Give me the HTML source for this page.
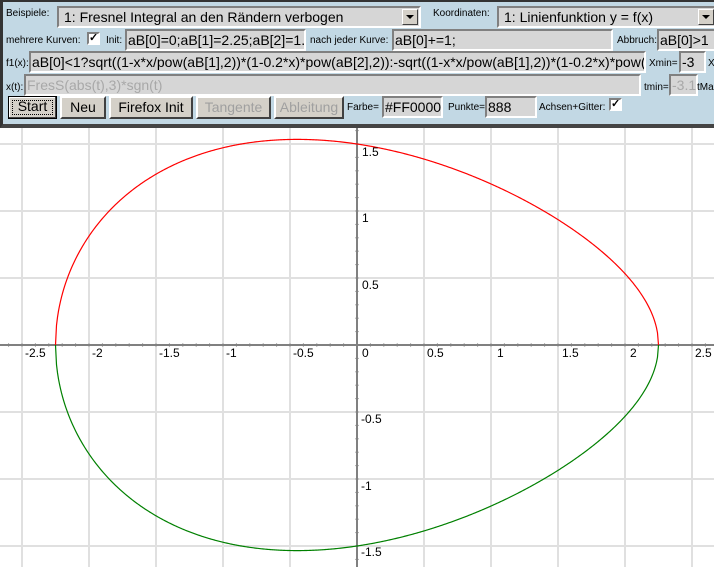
<!DOCTYPE html>
<html style="overflow:hidden;width:714px;height:567px"><head><meta charset="utf-8"><style>
*{box-sizing:border-box}
body{margin:0;width:714px;height:567px;overflow:hidden;background:#fff;font-family:"Liberation Sans",Arial,sans-serif;position:relative}
#panel{position:absolute;left:0;top:0;width:714px;height:128px;background:#c2d8e4;border-left:3px solid #333;border-top:2px solid #333;border-bottom:4px solid #444}
.l{position:absolute;font-size:10px;color:#000;white-space:nowrap}
.i{position:absolute;height:22px;background:#d6d6d6;border:2px solid;border-color:#808080 #fff #fff #808080;font-size:14px;line-height:18px;padding-left:1px;white-space:nowrap;overflow:hidden;color:#000}
.g{color:#a8a8a8}
.sel{position:absolute;height:22px;background:#d6d6d6;border:2px solid;border-color:#808080 #fff #fff #808080;font-size:14px;line-height:18px;padding-left:5px;white-space:nowrap;overflow:hidden}
.arr{position:absolute;right:1px;top:1px;width:16px;height:16px;background:#d4d0c8;border:1px solid;border-color:#fff #404040 #404040 #fff}
.arr:after{content:"";position:absolute;left:3px;top:5px;border-left:4px solid transparent;border-right:4px solid transparent;border-top:4px solid #000}
.b{position:absolute;top:96px;height:23px;background:#d4d0c8;border:2px solid;border-color:#fff #404040 #404040 #fff;font-size:14px;line-height:19px;text-align:center;color:#000}
.cb{position:absolute;width:13px;height:13px;background:#fff;border:2px solid;border-color:#808080 #fff #fff #808080;font-size:11px;line-height:9px;text-align:center;font-weight:bold}
</style></head><body>
<svg id="plot" width="714" height="567" style="position:absolute;left:0;top:0">
<g id="grid" stroke="#e0e0e0" stroke-width="2"></g>
<g id="ticks" stroke="#b0b0b0" stroke-width="1"></g>
<line x1="0" y1="345" x2="714" y2="345" stroke="#808080" stroke-width="2"/>
<line x1="357" y1="128" x2="357" y2="567" stroke="#808080" stroke-width="2"/>
<path id="up" fill="none" stroke="#ff0000" stroke-width="1.2"/>
<path id="dn" fill="none" stroke="#008000" stroke-width="1.2"/>
<g font-family="Liberation Sans,Arial,sans-serif" font-size="12" fill="#000">
<text x="25" y="357">-2.5</text><text x="92" y="357">-2</text><text x="159" y="357">-1.5</text><text x="226" y="357">-1</text><text x="293" y="357">-0.5</text>
<text x="362" y="357">0</text><text x="427" y="357">0.5</text><text x="497" y="357">1</text><text x="562" y="357">1.5</text><text x="630" y="357">2</text><text x="695" y="357">2.5</text>
<text x="362" y="156">1.5</text><text x="362" y="222">1</text><text x="362" y="289">0.5</text>
<text x="361" y="423">-0.5</text><text x="361" y="490">-1</text><text x="361" y="556">-1.5</text>
</g>
</svg>
<script>
(function(){var ox=357,oy=345,u=134,g=document.getElementById('grid'),t=document.getElementById('ticks'),s='',tk='';
for(var k=-6;k<=6;k++){var x=ox+k*u/2;s+='<line x1="'+x+'" y1="128" x2="'+x+'" y2="567"/>';var y=oy+k*u/2;if(y>128&&y<567)s+='<line x1="0" y1="'+y+'" x2="714" y2="'+y+'"/>';}
for(var k=-30;k<=30;k++){var x=ox+k*u/10;if(x>=0&&x<=714)tk+='<line x1="'+x+'" y1="343" x2="'+x+'" y2="347"/>';var y=oy+k*u/10;if(y>128&&y<567)tk+='<line x1="355" y1="'+y+'" x2="359" y2="'+y+'"/>';}
g.innerHTML=s;t.innerHTML=tk;
var a=2.25,b=1.5,pu='',pd='';
for(var i=0;i<=600;i++){var x=-a+2*a*i/600;var v=(1-x*x/(a*a))*(1-0.2*x)*b*b;if(v<0)v=0;var y=Math.sqrt(v);var X=(ox+x*u).toFixed(2);pu+=(i?'L':'M')+X+' '+(oy-y*u).toFixed(2);pd+=(i?'L':'M')+X+' '+(oy+y*u).toFixed(2);}
document.getElementById('up').setAttribute('d',pu);document.getElementById('dn').setAttribute('d',pd);})();
</script>
<div id="panel"></div>
<div class="l" style="left:6px;top:8px">Beispiele:</div>
<div class="sel" style="left:57px;top:6px;width:364px">1: Fresnel Integral an den Rändern verbogen<div class="arr"></div></div>
<div class="l" style="left:433px;top:8px">Koordinaten:</div>
<div class="sel" style="left:497px;top:6px;width:217px;border-right:none">1: Linienfunktion y = f(x)<div class="arr" style="right:0px"></div></div>
<div class="l" style="left:6px;top:35px">mehrere Kurven:</div>
<div class="cb" style="left:87px;top:32px">✓</div>
<div class="l" style="left:106px;top:35px">Init:</div>
<div class="i" style="left:125px;top:29px;width:181px">aB[0]=0;aB[1]=2.25;aB[2]=1.5</div>
<div class="l" style="left:310px;top:35px">nach jeder Kurve:</div>
<div class="i" style="left:392px;top:29px;width:221px">aB[0]+=1;</div>
<div class="l" style="left:617px;top:35px">Abbruch:</div>
<div class="i" style="left:657px;top:29px;width:57px;border-right:none">aB[0]&gt;1</div>
<div class="l" style="left:6px;top:58px">f1(x):</div>
<div class="i" style="left:29px;top:51px;width:617px">aB[0]&lt;1?sqrt((1-x*x/pow(aB[1],2))*(1-0.2*x)*pow(aB[2],2)):-sqrt((1-x*x/pow(aB[1],2))*(1-0.2*x)*pow(aB[2],2)</div>
<div class="l" style="left:649px;top:58px">Xmin=</div>
<div class="i" style="left:679px;top:51px;width:27px">-3</div>
<div class="l" style="left:708px;top:58px">X</div>
<div class="l" style="left:6px;top:82px">x(t):</div>
<div class="i g" style="left:24px;top:74px;width:617px">FresS(abs(t),3)*sgn(t)</div>
<div class="l" style="left:644px;top:82px">tmin=</div>
<div class="i g" style="left:669px;top:74px;width:29px">-3.1</div>
<div class="l" style="left:697px;top:82px">tMa</div>
<div class="b" style="left:8px;width:49px;border:1px solid #000;outline:1px dotted #000;outline-offset:-5px;box-shadow:inset -1px -1px #404040,inset 1px 1px #fff">Start</div>
<div class="b" style="left:60px;width:46px">Neu</div>
<div class="b" style="left:109px;width:84px">Firefox Init</div>
<div class="b" style="left:196px;width:75px;color:#a0a0a0">Tangente</div>
<div class="b" style="left:274px;width:70px;color:#a0a0a0">Ableitung</div>
<div class="l" style="left:347px;top:102px">Farbe=</div>
<div class="i" style="left:382px;top:96px;width:61px">#FF0000</div>
<div class="l" style="left:448px;top:102px">Punkte=</div>
<div class="i" style="left:485px;top:96px;width:52px">888</div>
<div class="l" style="left:539px;top:102px">Achsen+Gitter:</div>
<div class="cb" style="left:609px;top:98px">✓</div>
</body></html>
